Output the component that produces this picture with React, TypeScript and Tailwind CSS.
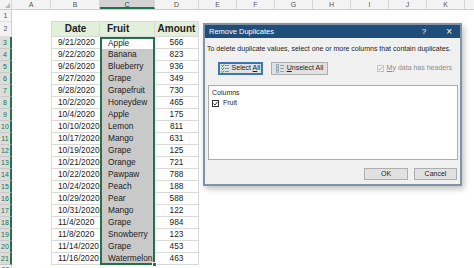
import React from "react";

const rows: [string, string, string][] = [
  ["9/21/2020", "Apple", "566"],
  ["9/22/2020", "Banana", "823"],
  ["9/26/2020", "Blueberry", "936"],
  ["9/27/2020", "Grape", "349"],
  ["9/28/2020", "Grapefruit", "730"],
  ["10/2/2020", "Honeydew", "465"],
  ["10/4/2020", "Apple", "175"],
  ["10/10/2020", "Lemon", "811"],
  ["10/17/2020", "Mango", "631"],
  ["10/19/2020", "Grape", "125"],
  ["10/21/2020", "Orange", "721"],
  ["10/22/2020", "Pawpaw", "788"],
  ["10/24/2020", "Peach", "188"],
  ["10/29/2020", "Pear", "588"],
  ["10/31/2020", "Mango", "122"],
  ["11/4/2020", "Grape", "984"],
  ["11/8/2020", "Snowberry", "123"],
  ["11/14/2020", "Grape", "453"],
  ["11/16/2020", "Watermelon", "463"],
];

const rightCols = ["E", "F", "G", "H", "I", "J", "K"];

function RightCells() {
  return (
    <>
      <div className="w-[38px] shrink-0" />
      <div className="w-[38px] shrink-0" />
      <div className="w-[38px] shrink-0" />
      <div className="w-[38px] shrink-0" />
      <div className="w-[38px] shrink-0" />
      <div className="w-[38px] shrink-0" />
      <div className="w-[38px] shrink-0" />
      <div className="flex-1" />
    </>
  );
}

function SelectAllIcon() {
  return (
    <svg width="8" height="10" viewBox="0 0 8 10">
      <path d="M0.5 1.5 L1.5 2.5 L3 0.5" stroke="#2e8b3d" strokeWidth="1" fill="none" />
      <path d="M0.5 4.5 L1.5 5.5 L3 3.5" stroke="#2e8b3d" strokeWidth="1" fill="none" />
      <path d="M0.5 7.5 L1.5 8.5 L3 6.5" stroke="#2e8b3d" strokeWidth="1" fill="none" />
      <rect x="4" y="1" width="4" height="1" fill="#7a9aa8" />
      <rect x="4" y="4" width="4" height="1" fill="#7a9aa8" />
      <rect x="4" y="7" width="4" height="1" fill="#7a9aa8" />
    </svg>
  );
}

function UnselectAllIcon() {
  return (
    <svg width="8" height="10" viewBox="0 0 8 10">
      <rect x="0.5" y="0.5" width="2" height="2" fill="none" stroke="#8da3b3" strokeWidth="0.8" />
      <rect x="0.5" y="3.5" width="2" height="2" fill="none" stroke="#8da3b3" strokeWidth="0.8" />
      <rect x="0.5" y="6.5" width="2" height="2" fill="none" stroke="#8da3b3" strokeWidth="0.8" />
      <rect x="4" y="1" width="4" height="1" fill="#8da3b3" />
      <rect x="4" y="4" width="4" height="1" fill="#8da3b3" />
      <rect x="4" y="7" width="4" height="1" fill="#8da3b3" />
    </svg>
  );
}

function Dialog() {
  return (
    <div className="absolute left-[203px] top-[23px] w-[259px] h-[163px] border-2 border-[#8193a6] bg-[#f0f0f0] flex flex-col shadow-[2px_3px_6px_rgba(0,0,0,0.25)] text-[#1e1e1e]">
      <div className="h-[13px] bg-[#1e4e79] flex items-center pl-[4px] pr-[8px] text-white">
        <span className="text-[7.5px] leading-none">Remove Duplicates</span>
        <span className="ml-auto text-[8px] leading-none mr-[20px]">?</span>
        <span className="text-[10px] leading-none">×</span>
      </div>
      <div className="pt-[7px] pl-[2px] text-[7px] leading-[8px] whitespace-nowrap">
        To delete duplicate values, select one or more columns that contain duplicates.
      </div>
      <div className="mt-[9px] flex items-center pl-[13px] pr-[8px]">
        <div className="w-[45px] h-[13px] border border-[#3a78b5] bg-[#e1e1e1] shadow-[inset_0_0_0_1px_#3a78b5] flex items-center justify-center gap-[3px] text-[7px]">
          <SelectAllIcon />
          <span>
            Select <span className="underline">A</span>ll
          </span>
        </div>
        <div className="ml-[8px] w-[57px] h-[13px] border border-[#adadad] bg-[#e1e1e1] flex items-center justify-center gap-[3px] text-[7px]">
          <UnselectAllIcon />
          <span>
            <span className="underline">U</span>nselect All
          </span>
        </div>
        <div className="ml-auto flex items-center gap-[3px] text-[7px] text-[#8d8d8d]">
          <div className="w-[7px] h-[7px] border border-[#c4c4c4] bg-[#f4f4f4] flex items-center justify-center">
            <svg width="5" height="5" viewBox="0 0 5 5">
              <path d="M0.5 2.5 L2 4 L4.5 0.8" stroke="#a9a9a9" strokeWidth="0.9" fill="none" />
            </svg>
          </div>
          <span>
            <span className="underline">M</span>y data has headers
          </span>
        </div>
      </div>
      <div className="mt-[10px] ml-[3px] mr-[2px] h-[75px] bg-white border border-[#acacac] px-[3px] pt-[2px] text-[7px]">
        <div className="leading-[10px]">Columns</div>
        <div className="flex items-center gap-[4px] leading-[10px]">
          <div className="w-[7px] h-[7px] border border-[#333] bg-white flex items-center justify-center">
            <svg width="5" height="5" viewBox="0 0 5 5">
              <path d="M0.5 2.5 L2 4 L4.5 0.8" stroke="#222" strokeWidth="0.9" fill="none" />
            </svg>
          </div>
          <span>Fruit</span>
        </div>
      </div>
      <div className="mt-[8px] flex justify-end gap-[6px] pr-[3px] text-[7px]">
        <div className="w-[44px] h-[12px] border border-[#adadad] bg-[#e1e1e1] flex items-center justify-center">
          OK
        </div>
        <div className="w-[43px] h-[12px] border border-[#adadad] bg-[#e1e1e1] flex items-center justify-center">
          Cancel
        </div>
      </div>
    </div>
  );
}

export default function App() {
  return (
    <div
      className="relative w-[474px] h-[268px] overflow-hidden bg-white text-[#222]"
      style={{ fontFamily: '"Liberation Sans", Arial, sans-serif' }}
    >
      {/* column headers */}
      <div className="flex h-[10px] bg-[#f3f3f3] border-b border-[#cfcfcf] text-[7px] text-[#555] leading-[9px]">
        <div className="w-[12px] shrink-0 border-r border-[#d6d6d6] relative">
          <div className="absolute right-[1px] bottom-[1px] w-0 h-0 border-l-[5px] border-l-transparent border-b-[5px] border-b-[#b8b8b8]" />
        </div>
        <div className="w-[39px] shrink-0 border-r border-[#d6d6d6] text-center">A</div>
        <div className="w-[49px] shrink-0 border-r border-[#d6d6d6] text-center">B</div>
        <div className="w-[55px] shrink-0 border-r border-[#d6d6d6] bg-[#d3d3d3] border-b-2 border-b-[#217346] text-center text-[#0f5132]">C</div>
        <div className="w-[44px] shrink-0 border-r border-[#d6d6d6] text-center">D</div>
        {rightCols.map((c) => (
          <div key={c} className="w-[38px] shrink-0 border-r border-[#d6d6d6] text-center">
            {c}
          </div>
        ))}
        <div className="flex-1" />
      </div>

      {/* row 1 */}
      <div className="flex h-[12px] text-[7px] leading-[12px]">
        <div className="w-[12px] shrink-0 bg-[#f3f3f3] border-r border-[#cfcfcf] border-b border-b-[#e0e0e0] text-center text-[#555]">1</div>
        <div className="w-[39px] shrink-0" />
        <div className="w-[49px] shrink-0 border-b border-[#d9d9d9]" />
        <div className="w-[55px] shrink-0 border-b border-[#d9d9d9]" />
        <div className="w-[44px] shrink-0 border-b border-[#d9d9d9]" />
        <RightCells />
      </div>

      {/* row 2 - table header */}
      <div className="flex h-[15px] text-[10px] font-bold leading-[14px]">
        <div className="w-[12px] shrink-0 bg-[#f3f3f3] border-r border-[#cfcfcf] border-b border-b-[#e0e0e0] text-center text-[7px] font-normal text-[#555]">2</div>
        <div className="w-[39px] shrink-0" />
        <div className="w-[49px] shrink-0 bg-[#e2efda] border-l border-b border-r border-[#d9d9d9] text-center">Date</div>
        <div className="w-[55px] shrink-0 bg-[#e2efda] border-b border-r border-[#d9d9d9] pl-[7px]">Fruit</div>
        <div className="w-[44px] shrink-0 bg-[#e2efda] border-b border-r border-[#d9d9d9] text-center">Amount</div>
        <RightCells />
      </div>

      {rows.map(([date, fruit, amount], i) => {
        const first = i === 0;
        const last = i === rows.length - 1;
        return (
          <div key={i} className="flex h-[12px] text-[8.3px] leading-[11px]">
            <div className="w-[12px] shrink-0 bg-[#dcdcdc] border-r-2 border-[#217346] border-b border-b-[#c8c8c8] text-center text-[7px] text-[#217346]">
              {i + 3}
            </div>
            <div className="w-[39px] shrink-0" />
            <div className="w-[49px] shrink-0 border-l border-b border-[#d9d9d9] pl-[6px]">{date}</div>
            <div
              className={
                "w-[55px] shrink-0 border-x-2 border-[#217346] pl-[6px] relative " +
                (first ? "bg-white border-t-2 leading-[9px] " : "bg-[#c9c9c9] ") +
                (last ? "border-b-2 leading-[11px]" : "")
              }
            >
              {fruit}
              {last && (
                <div className="absolute right-[-4px] bottom-[-4px] w-[5px] h-[5px] bg-[#217346] border border-white" />
              )}
            </div>
            <div className="w-[44px] shrink-0 border-b border-r border-[#d9d9d9] text-center">{amount}</div>
            <RightCells />
          </div>
        );
      })}

      {/* row 22 */}
      <div className="flex h-[12px] text-[7px] leading-[9px]">
        <div className="w-[12px] shrink-0 bg-[#f3f3f3] border-r border-[#cfcfcf] text-center text-[#555]">22</div>
      </div>

      <Dialog />
    </div>
  );
}
